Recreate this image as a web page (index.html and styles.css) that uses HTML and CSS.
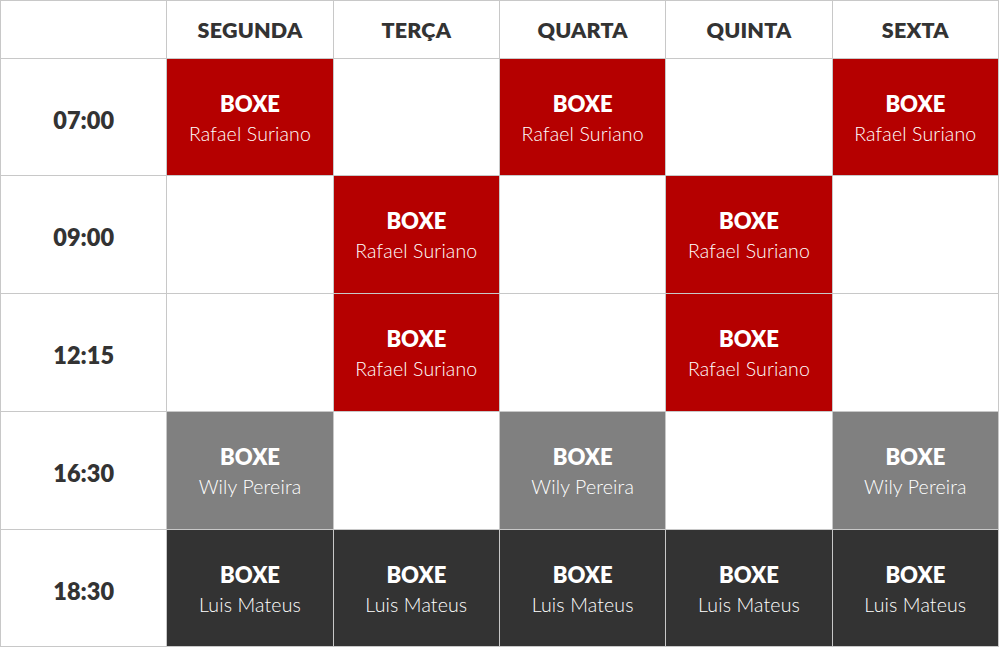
FILE: index.html
```html
<!DOCTYPE html>
<html lang="pt">
<head>
<meta charset="utf-8">
<title>Horários</title>
<link rel="stylesheet" href="styles.css">
</head>
<body>
<table class="schedule">
  <thead>
    <tr>
      <th class="corner"></th>
      <th>SEGUNDA</th>
      <th>TERÇA</th>
      <th>QUARTA</th>
      <th>QUINTA</th>
      <th>SEXTA</th>
    </tr>
  </thead>
  <tbody>
    <tr class="edge">
      <td class="time">07:00</td>
      <td class="red"><span class="cls">BOXE</span><span class="coach">Rafael Suriano</span></td>
      <td></td>
      <td class="red"><span class="cls">BOXE</span><span class="coach">Rafael Suriano</span></td>
      <td></td>
      <td class="red"><span class="cls">BOXE</span><span class="coach">Rafael Suriano</span></td>
    </tr>
    <tr>
      <td class="time">09:00</td>
      <td></td>
      <td class="red"><span class="cls">BOXE</span><span class="coach">Rafael Suriano</span></td>
      <td></td>
      <td class="red"><span class="cls">BOXE</span><span class="coach">Rafael Suriano</span></td>
      <td></td>
    </tr>
    <tr>
      <td class="time">12:15</td>
      <td></td>
      <td class="red"><span class="cls">BOXE</span><span class="coach">Rafael Suriano</span></td>
      <td></td>
      <td class="red"><span class="cls">BOXE</span><span class="coach">Rafael Suriano</span></td>
      <td></td>
    </tr>
    <tr>
      <td class="time">16:30</td>
      <td class="gray"><span class="cls">BOXE</span><span class="coach">Wily Pereira</span></td>
      <td></td>
      <td class="gray"><span class="cls">BOXE</span><span class="coach">Wily Pereira</span></td>
      <td></td>
      <td class="gray"><span class="cls">BOXE</span><span class="coach">Wily Pereira</span></td>
    </tr>
    <tr class="edge">
      <td class="time">18:30</td>
      <td class="dark"><span class="cls">BOXE</span><span class="coach">Luis Mateus</span></td>
      <td class="dark"><span class="cls">BOXE</span><span class="coach">Luis Mateus</span></td>
      <td class="dark"><span class="cls">BOXE</span><span class="coach">Luis Mateus</span></td>
      <td class="dark"><span class="cls">BOXE</span><span class="coach">Luis Mateus</span></td>
      <td class="dark"><span class="cls">BOXE</span><span class="coach">Luis Mateus</span></td>
    </tr>
  </tbody>
</table>
</body>
</html>
```
FILE: styles.css
```css
html, body {
  margin: 0;
  padding: 0;
  background: #fff;
}

body {
  font-family: Lato, "Liberation Sans", sans-serif;
  color: #333;
}

.schedule {
  width: 999px;
  border-collapse: collapse;
  table-layout: fixed;
}

.schedule th,
.schedule td {
  border: 1px solid #c8c8c8;
  text-align: center;
  vertical-align: middle;
  padding: 0;
}

.schedule th {
  height: 57px;
  font-size: 21.5px;
  font-weight: 800;
  color: #333;
  letter-spacing: 0.2px;
}

.schedule td {
  height: 114px;
  padding-top: 3px;
}

.schedule tr.edge td {
  height: 113px;
}

.schedule td.time {
  padding-top: 5px;
  height: 112px;
}

.schedule tr.edge td.time {
  height: 111px;
}

.time {
  font-size: 23.5px;
  font-weight: 800;
  color: #333;
}

.cls {
  display: block;
  font-size: 22px;
  font-weight: 800;
  line-height: 28px;
  color: #fff;
}

.coach {
  display: block;
  font-size: 19.5px;
  font-weight: 300;
  line-height: 28px;
  margin-top: 2px;
  color: #fff;
  letter-spacing: 0.15px;
}

.red {
  background: #b50000;
}

.gray {
  background: #808080;
}

.dark {
  background: #333333;
}
```
